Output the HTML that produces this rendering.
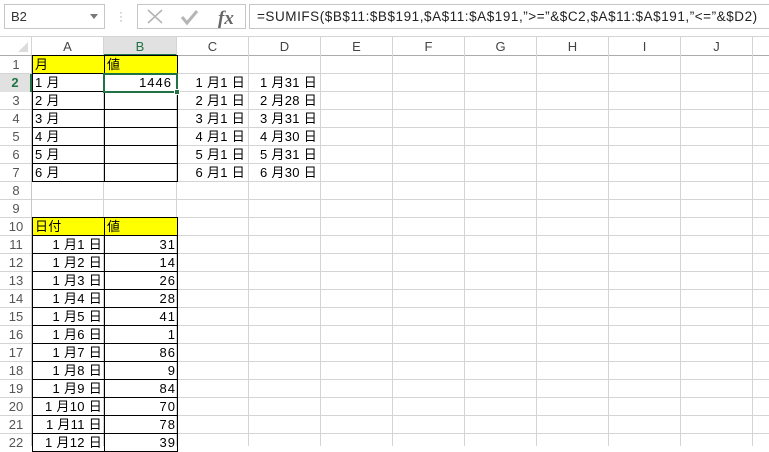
<!DOCTYPE html><html><head><meta charset="utf-8"><style>
body{margin:0;width:769px;height:446px;overflow:hidden;background:#fff;font-family:"Liberation Sans","Noto Sans CJK JP",sans-serif;position:relative}
div{position:absolute;box-sizing:border-box}
.box{border:1px solid #c6c6c6;background:#fff;top:4px;height:25px}
.ch{top:37px;height:19px;font-size:13px;color:#444;text-align:center;line-height:19px;border-right:1px solid #d4d4d4}
.rh{left:0;width:32px;height:18px;font-size:13px;color:#555;text-align:center;line-height:18px}
.vl{top:56px;bottom:0;width:1px;background:#d4d4d4}
.c{font-size:13px;line-height:17px;height:19px;border:1px solid #000;padding:0 2px;white-space:nowrap;color:#000;letter-spacing:0.3px}
.r{text-align:right;padding-right:2px}
.n{letter-spacing:1px;padding-right:1px}
.t{font-size:13px;line-height:18px;height:18px;text-align:right;white-space:nowrap;color:#000;letter-spacing:0.3px}
</style></head><body>
<div class="box" style="left:4px;width:101px;font-size:13px;line-height:23px;padding-left:6px;color:#333">B2<span style="position:absolute;right:6px;top:9px;border-left:4px solid transparent;border-right:4px solid transparent;border-top:5px solid #777"></span></div>
<div style="left:119px;top:10px;color:#aaa;font-size:12px;line-height:4px">·<br>·<br>·</div>
<div class="box" style="left:137px;width:109px">
<svg width="107" height="23" style="position:absolute;left:0;top:0"><path d="M10 5L24 18M24 5L10 18" stroke="#b5b5b5" stroke-width="1.6" fill="none"/><path d="M44 12l5 6 10-12" stroke="#b5b5b5" stroke-width="3" fill="none"/><text x="80" y="19" font-family="Liberation Serif,serif" font-style="italic" font-weight="bold" font-size="19" fill="#666">fx</text></svg></div>
<div class="box" style="left:249px;width:525px;font-size:13.5px;line-height:23px;padding-left:7px;color:#222;white-space:nowrap;letter-spacing:0.55px">=SUMIFS($B$11:$B$191,$A$11:$A$191,”&gt;=”&amp;$C2,$A$11:$A$191,”&lt;=”&amp;$D2)</div>
<div style="left:0;top:36px;width:769px;height:1px;background:#d4d4d4"></div>
<div style="left:0;top:55px;width:769px;height:1px;background:#ababab"></div>
<div style="left:0;top:37px;width:32px;height:18px;border-right:1px solid #d4d4d4"><div style="right:3px;bottom:3px;width:0;height:0;border-left:10px solid transparent;border-bottom:10px solid #dcdcdc"></div></div>
<div class="ch" style="left:32px;width:72px">A</div>
<div class="ch" style="left:104px;width:73px;background:#e1e1e1;color:#217346;border-bottom:2px solid #217346">B</div>
<div class="ch" style="left:177px;width:72px">C</div>
<div class="ch" style="left:249px;width:72px">D</div>
<div class="ch" style="left:321px;width:72px">E</div>
<div class="ch" style="left:393px;width:72px">F</div>
<div class="ch" style="left:465px;width:72px">G</div>
<div class="ch" style="left:537px;width:72px">H</div>
<div class="ch" style="left:609px;width:72px">I</div>
<div class="ch" style="left:681px;width:72px">J</div>
<div style="left:0;top:56px;width:769px;height:390px;background:repeating-linear-gradient(to bottom,transparent 0,transparent 17px,#d4d4d4 17px,#d4d4d4 18px)"></div>
<div class="vl" style="left:31px;background:#c6c6c6"></div>
<div class="vl" style="left:103px"></div><div class="vl" style="left:176px"></div><div class="vl" style="left:248px"></div><div class="vl" style="left:320px"></div><div class="vl" style="left:392px"></div><div class="vl" style="left:464px"></div><div class="vl" style="left:536px"></div><div class="vl" style="left:608px"></div><div class="vl" style="left:680px"></div><div class="vl" style="left:752px"></div>
<div class="rh" style="top:56px">1</div>
<div class="rh" style="top:74px;background:#e1e1e1;color:#217346;border-right:2px solid #217346;font-weight:bold">2</div>
<div class="rh" style="top:92px">3</div><div class="rh" style="top:110px">4</div><div class="rh" style="top:128px">5</div><div class="rh" style="top:146px">6</div><div class="rh" style="top:164px">7</div><div class="rh" style="top:182px">8</div><div class="rh" style="top:200px">9</div><div class="rh" style="top:218px">10</div><div class="rh" style="top:236px">11</div><div class="rh" style="top:254px">12</div><div class="rh" style="top:272px">13</div><div class="rh" style="top:290px">14</div><div class="rh" style="top:308px">15</div><div class="rh" style="top:326px">16</div><div class="rh" style="top:344px">17</div><div class="rh" style="top:362px">18</div><div class="rh" style="top:380px">19</div><div class="rh" style="top:398px">20</div><div class="rh" style="top:416px">21</div><div class="rh" style="top:434px">22</div>
<div class="c" style="left:32px;top:55px;width:73px;background:#ff0">月</div><div class="c" style="left:104px;top:55px;width:74px;background:#ff0">値</div>
<div class="c" style="left:32px;top:73px;width:73px">1 月</div><div class="c r n" style="left:104px;top:73px;width:74px;padding-right:5px">1446</div>
<div class="c" style="left:32px;top:91px;width:73px">2 月</div><div class="c" style="left:104px;top:91px;width:74px"></div>
<div class="c" style="left:32px;top:109px;width:73px">3 月</div><div class="c" style="left:104px;top:109px;width:74px"></div>
<div class="c" style="left:32px;top:127px;width:73px">4 月</div><div class="c" style="left:104px;top:127px;width:74px"></div>
<div class="c" style="left:32px;top:145px;width:73px">5 月</div><div class="c" style="left:104px;top:145px;width:74px"></div>
<div class="c" style="left:32px;top:163px;width:73px">6 月</div><div class="c" style="left:104px;top:163px;width:74px"></div>
<div style="left:103px;top:73px;width:75px;height:20px;border:2px solid #217346"></div>
<div style="left:174px;top:89px;width:6px;height:6px;background:#217346;border:1px solid #fff"></div>
<div class="t" style="left:177px;top:74px;width:68px">1 月1 日</div><div class="t" style="left:249px;top:74px;width:68px">1 月31 日</div>
<div class="t" style="left:177px;top:92px;width:68px">2 月1 日</div><div class="t" style="left:249px;top:92px;width:68px">2 月28 日</div>
<div class="t" style="left:177px;top:110px;width:68px">3 月1 日</div><div class="t" style="left:249px;top:110px;width:68px">3 月31 日</div>
<div class="t" style="left:177px;top:128px;width:68px">4 月1 日</div><div class="t" style="left:249px;top:128px;width:68px">4 月30 日</div>
<div class="t" style="left:177px;top:146px;width:68px">5 月1 日</div><div class="t" style="left:249px;top:146px;width:68px">5 月31 日</div>
<div class="t" style="left:177px;top:164px;width:68px">6 月1 日</div><div class="t" style="left:249px;top:164px;width:68px">6 月30 日</div>
<div class="c" style="left:32px;top:217px;width:73px;background:#ff0">日付</div><div class="c" style="left:104px;top:217px;width:74px;background:#ff0">値</div>
<div class="c r" style="left:32px;top:235px;width:73px">1 月1 日</div><div class="c r n" style="left:104px;top:235px;width:74px">31</div>
<div class="c r" style="left:32px;top:253px;width:73px">1 月2 日</div><div class="c r n" style="left:104px;top:253px;width:74px">14</div>
<div class="c r" style="left:32px;top:271px;width:73px">1 月3 日</div><div class="c r n" style="left:104px;top:271px;width:74px">26</div>
<div class="c r" style="left:32px;top:289px;width:73px">1 月4 日</div><div class="c r n" style="left:104px;top:289px;width:74px">28</div>
<div class="c r" style="left:32px;top:307px;width:73px">1 月5 日</div><div class="c r n" style="left:104px;top:307px;width:74px">41</div>
<div class="c r" style="left:32px;top:325px;width:73px">1 月6 日</div><div class="c r n" style="left:104px;top:325px;width:74px">1</div>
<div class="c r" style="left:32px;top:343px;width:73px">1 月7 日</div><div class="c r n" style="left:104px;top:343px;width:74px">86</div>
<div class="c r" style="left:32px;top:361px;width:73px">1 月8 日</div><div class="c r n" style="left:104px;top:361px;width:74px">9</div>
<div class="c r" style="left:32px;top:379px;width:73px">1 月9 日</div><div class="c r n" style="left:104px;top:379px;width:74px">84</div>
<div class="c r" style="left:32px;top:397px;width:73px">1 月10 日</div><div class="c r n" style="left:104px;top:397px;width:74px">70</div>
<div class="c r" style="left:32px;top:415px;width:73px">1 月11 日</div><div class="c r n" style="left:104px;top:415px;width:74px">78</div>
<div class="c r" style="left:32px;top:433px;width:73px">1 月12 日</div><div class="c r n" style="left:104px;top:433px;width:74px">39</div>
</body></html>
